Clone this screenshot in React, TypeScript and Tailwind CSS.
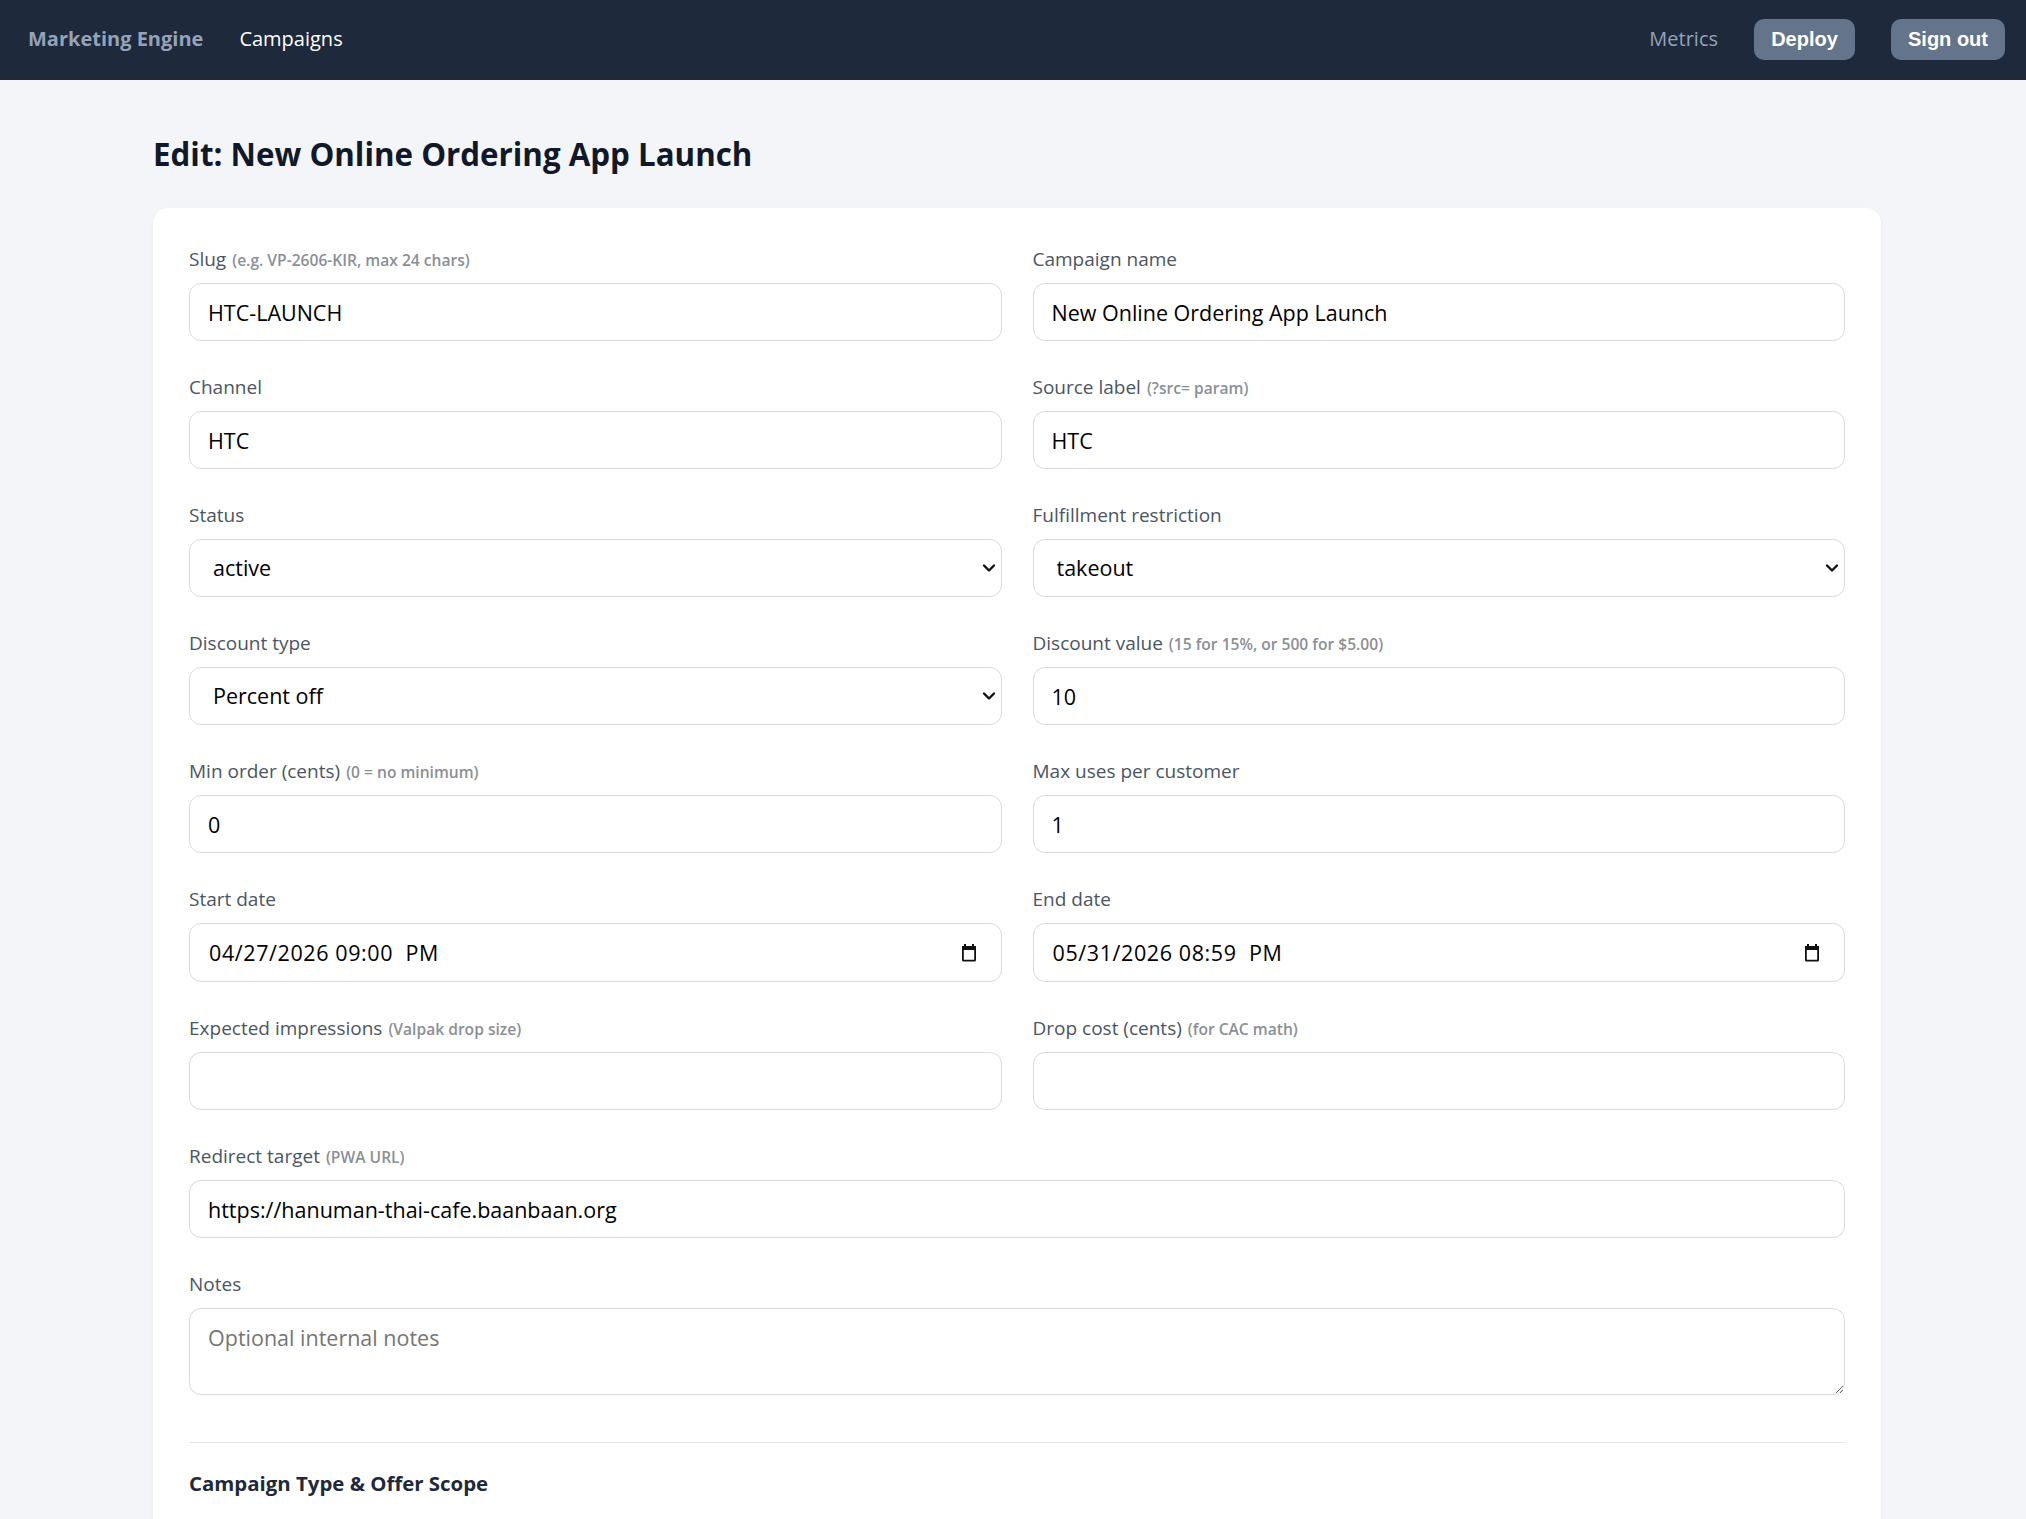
import React from "react";

type FieldProps = { label: string; hint?: string; children: React.ReactNode; wide?: boolean };

function Field({ label, hint, children, wide }: FieldProps) {
  return (
    <div className={wide ? "col-span-2" : ""}>
      <label className="block h-[29px] mb-[10px] pt-[1px] text-[19px] leading-[29px] font-medium text-[#4b5563] whitespace-nowrap">
        {label}
        {hint && <span className="ml-[6px] text-[15.6px] font-semibold text-[#8b8f96]">{hint}</span>}
      </label>
      {children}
    </div>
  );
}

function TextInput({ value, placeholder }: { value?: string; placeholder?: string }) {
  return (
    <input
      type="text"
      defaultValue={value}
      placeholder={placeholder}
      className="block w-full h-[58px] rounded-[12px] border border-[#d9d9d9] bg-white px-[18px] text-[21.5px] text-black outline-none placeholder:text-[#757575]"
    />
  );
}

function Chevron() {
  return (
    <svg
      className="pointer-events-none absolute right-[6px] top-1/2 -translate-y-1/2"
      width="14"
      height="10"
      viewBox="0 0 14 10"
      fill="none"
    >
      <path d="M2 2.5 L7 7.5 L12 2.5" stroke="#111" strokeWidth="2.4" strokeLinecap="round" strokeLinejoin="round" />
    </svg>
  );
}

function SelectInput({ value, options }: { value: string; options: string[] }) {
  return (
    <div className="relative">
      <select
        defaultValue={value}
        className="block w-full h-[58px] appearance-none rounded-[12px] border border-[#d9d9d9] bg-white pl-[23px] pr-[40px] text-[21.5px] text-black outline-none"
      >
        {options.map((o) => (
          <option key={o} value={o}>
            {o}
          </option>
        ))}
      </select>
      <Chevron />
    </div>
  );
}

function CalendarIcon() {
  return (
    <svg
      className="pointer-events-none absolute right-[25px] top-1/2 -translate-y-1/2"
      width="16"
      height="18"
      viewBox="0 0 16 18"
      fill="none"
    >
      <rect x="3" y="0" width="2" height="3" fill="#111" />
      <rect x="11" y="0" width="2" height="3" fill="#111" />
      <rect x="1.9" y="2.9" width="12.2" height="13.7" rx="0.6" stroke="#111" strokeWidth="1.8" />
      <rect x="1" y="2" width="14" height="4" fill="#111" />
    </svg>
  );
}

function DateInput({ value }: { value: string }) {
  return (
    <div className="relative">
      <input
        type="text"
        defaultValue={value}
        className="block w-full h-[59px] rounded-[12px] border border-[#d9d9d9] bg-white pl-[19px] pr-[50px] text-[21.5px] tracking-[0.6px] text-black outline-none whitespace-pre"
      />
      <CalendarIcon />
    </div>
  );
}

export default function App() {
  return (
    <div className="min-h-screen bg-[#f4f5f9] font-['Open_Sans',sans-serif]">
      {/* top navigation */}
      <nav className="flex h-[80px] items-center justify-between bg-[#1e293b] pb-[2px] pl-[28px] pr-[21px]">
        <div className="flex items-center gap-[36px]">
          <span className="text-[20px] font-bold text-[#94a3b8]">Marketing Engine</span>
          <a className="text-[20px] text-white">Campaigns</a>
        </div>
        <div className="flex items-center gap-[36px]">
          <a className="text-[20px] text-[#94a3b8]">Metrics</a>
          <button className="h-[41px] w-[101px] rounded-[10px] bg-[#64748b] font-['Liberation_Sans',Arial,sans-serif] text-[20px] font-bold text-white">
            Deploy
          </button>
          <button className="h-[41px] w-[114px] rounded-[10px] bg-[#64748b] font-['Liberation_Sans',Arial,sans-serif] text-[20px] font-bold text-white">
            Sign out
          </button>
        </div>
      </nav>

      <main className="pl-[153px] pr-[145px] pt-[54px]">
        <h1 className="mb-[34px] text-[31.3px] leading-[40px] font-bold text-[#111827]">
          Edit: New Online Ordering App Launch
        </h1>

        <div className="rounded-[15px] bg-white p-[36px] pb-[240px] shadow-[0_1px_3px_rgba(15,23,42,0.06)]">
          <div className="grid grid-cols-2 gap-x-[31px] gap-y-[31px]">
            <Field label="Slug" hint="(e.g. VP-2606-KIR, max 24 chars)">
              <TextInput value="HTC-LAUNCH" />
            </Field>
            <Field label="Campaign name">
              <TextInput value="New Online Ordering App Launch" />
            </Field>

            <Field label="Channel">
              <TextInput value="HTC" />
            </Field>
            <Field label="Source label" hint="(?src= param)">
              <TextInput value="HTC" />
            </Field>

            <Field label="Status">
              <SelectInput value="active" options={["draft", "active", "paused", "ended"]} />
            </Field>
            <Field label="Fulfillment restriction">
              <SelectInput value="takeout" options={["any", "takeout", "delivery", "dine-in"]} />
            </Field>

            <Field label="Discount type">
              <SelectInput value="Percent off" options={["Percent off", "Amount off", "Free item"]} />
            </Field>
            <Field label="Discount value" hint="(15 for 15%, or 500 for $5.00)">
              <TextInput value="10" />
            </Field>

            <Field label="Min order (cents)" hint="(0 = no minimum)">
              <TextInput value="0" />
            </Field>
            <Field label="Max uses per customer">
              <TextInput value="1" />
            </Field>

            <Field label="Start date">
              <DateInput value="04/27/2026 09:00  PM" />
            </Field>
            <Field label="End date">
              <DateInput value="05/31/2026 08:59  PM" />
            </Field>

            <Field label="Expected impressions" hint="(Valpak drop size)">
              <TextInput />
            </Field>
            <Field label="Drop cost (cents)" hint="(for CAC math)">
              <TextInput />
            </Field>

            <Field label="Redirect target" hint="(PWA URL)" wide>
              <TextInput value="https://hanuman-thai-cafe.baanbaan.org" />
            </Field>

            <Field label="Notes" wide>
              <textarea
                placeholder="Optional internal notes"
                className="block h-[87px] w-full resize-y rounded-[12px] border border-[#d9d9d9] bg-white px-[18px] pt-[13px] pb-[8px] text-[21.5px] text-black outline-none placeholder:text-[#757575]"
              />
            </Field>
          </div>

          <div className="mt-[47px] border-t border-[#e5e7eb]" />

          <h2 className="mt-[26px] text-[20.4px] leading-[28px] font-bold text-[#1e293b]">
            Campaign Type &amp; Offer Scope
          </h2>
        </div>
      </main>
    </div>
  );
}
